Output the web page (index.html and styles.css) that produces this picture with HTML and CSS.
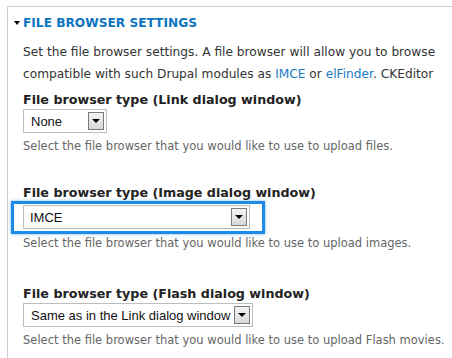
FILE: index.html
```html
<!DOCTYPE html>
<html>
<head>
<meta charset="utf-8">
<link rel="stylesheet" href="styles.css">
</head>
<body>
<div class="fieldset">
  <div class="legend"><span class="caret"></span>FILE BROWSER SETTINGS</div>
  <div class="content">
    <p class="intro">Set the file browser settings. A file browser will allow you to browse<br>compatible with such Drupal modules as <a href="#">IMCE</a> or <a href="#">elFinder</a>. CKEditor</p>

    <div class="item item-1">
      <div class="label">File browser type (Link dialog window)</div>
      <div class="select sel-none"><span class="val">None</span><span class="btn"><span class="tri"></span></span></div>
      <div class="desc">Select the file browser that you would like to use to upload files.</div>
    </div>

    <div class="item item-2">
      <div class="label">File browser type (Image dialog window)</div>
      <div class="focus">
        <div class="select sel-imce"><span class="val">IMCE</span><span class="btn"><span class="tri"></span></span></div>
      </div>
      <div class="desc desc-after-focus">Select the file browser that you would like to use to upload images.</div>
    </div>

    <div class="item item-3">
      <div class="label">File browser type (Flash dialog window)</div>
      <div class="select sel-same"><span class="val">Same as in the Link dialog window</span><span class="btn"><span class="tri"></span></span></div>
      <div class="desc">Select the file browser that you would like to use to upload Flash movies.</div>
    </div>
  </div>
</div>
</body>
</html>
```

FILE: styles.css
```css
html, body {
  margin: 0;
  padding: 0;
  background: #fff;
}
body {
  width: 452px;
  height: 358px;
  overflow: hidden;
  font-family: "DejaVu Sans", Verdana, sans-serif;
  color: #333;
}
.fieldset {
  margin: 6px 0 0 7px;
  border-top: 1px solid #cfcfcf;
  border-left: 1px solid #cfcfcf;
  height: 360px;
  box-sizing: border-box;
}
.legend {
  display: flex;
  align-items: center;
  margin: 9px 0 0 6px;
  height: 14px;
  font-size: 12.2px;
  font-weight: bold;
  color: #0a74c0;
}
.caret {
  width: 0;
  height: 0;
  border-left: 3.5px solid transparent;
  border-right: 3.5px solid transparent;
  border-top: 4px solid #000;
  margin-right: 3px;
}
.content {
  padding-left: 15px;
}
.intro {
  margin: 11px 0 0 0;
  font-size: 12.2px;
  line-height: 22px;
  color: #333;
  white-space: nowrap;
}
.intro a {
  color: #1a7bc4;
  text-decoration: none;
}
.label {
  font-size: 12.7px;
  font-weight: bold;
  color: #222;
  line-height: 16px;
  white-space: nowrap;
}
.item-1 { margin-top: 7px; }
.item-2 { margin-top: 32px; }
.item-3 { margin-top: 36px; }
.select {
  display: flex;
  align-items: center;
  box-sizing: border-box;
  height: 24px;
  border: 1px solid #bdbdbd;
  background: #fff;
  font-family: "Liberation Sans", Arial, sans-serif;
  font-size: 13px;
  color: #111;
  padding: 0 2px 0 6px;
  margin-top: 1px;
}
.val {
  flex: 1;
  white-space: nowrap;
}
.sel-none { width: 84px; padding-left: 7px; }
.sel-imce { width: 227px; }
.sel-same { width: 230px; padding-left: 7px; }
.btn {
  box-sizing: border-box;
  width: 16px;
  height: 18px;
  border: 1px solid #7a7a7a;
  background: linear-gradient(#f4f4f4, #d8d8d8);
  display: flex;
  align-items: center;
  justify-content: center;
}
.tri {
  width: 0;
  height: 0;
  border-left: 4px solid transparent;
  border-right: 4px solid transparent;
  border-top: 4px solid #000;
}
.focus {
  margin: 0 0 0 -12px;
  width: 254px;
  box-sizing: border-box;
  padding: 1px 12px 2px 9px;
  border: 3px solid #1e8ae8;
  box-shadow: 0 0 3px rgba(30,138,232,0.6);
}
.focus .select { margin-top: 0; }
.desc {
  margin-top: 6px;
  font-size: 11.5px;
  color: #666;
  line-height: 14px;
  white-space: nowrap;
}
.desc-after-focus { margin-top: 2px; }
```
